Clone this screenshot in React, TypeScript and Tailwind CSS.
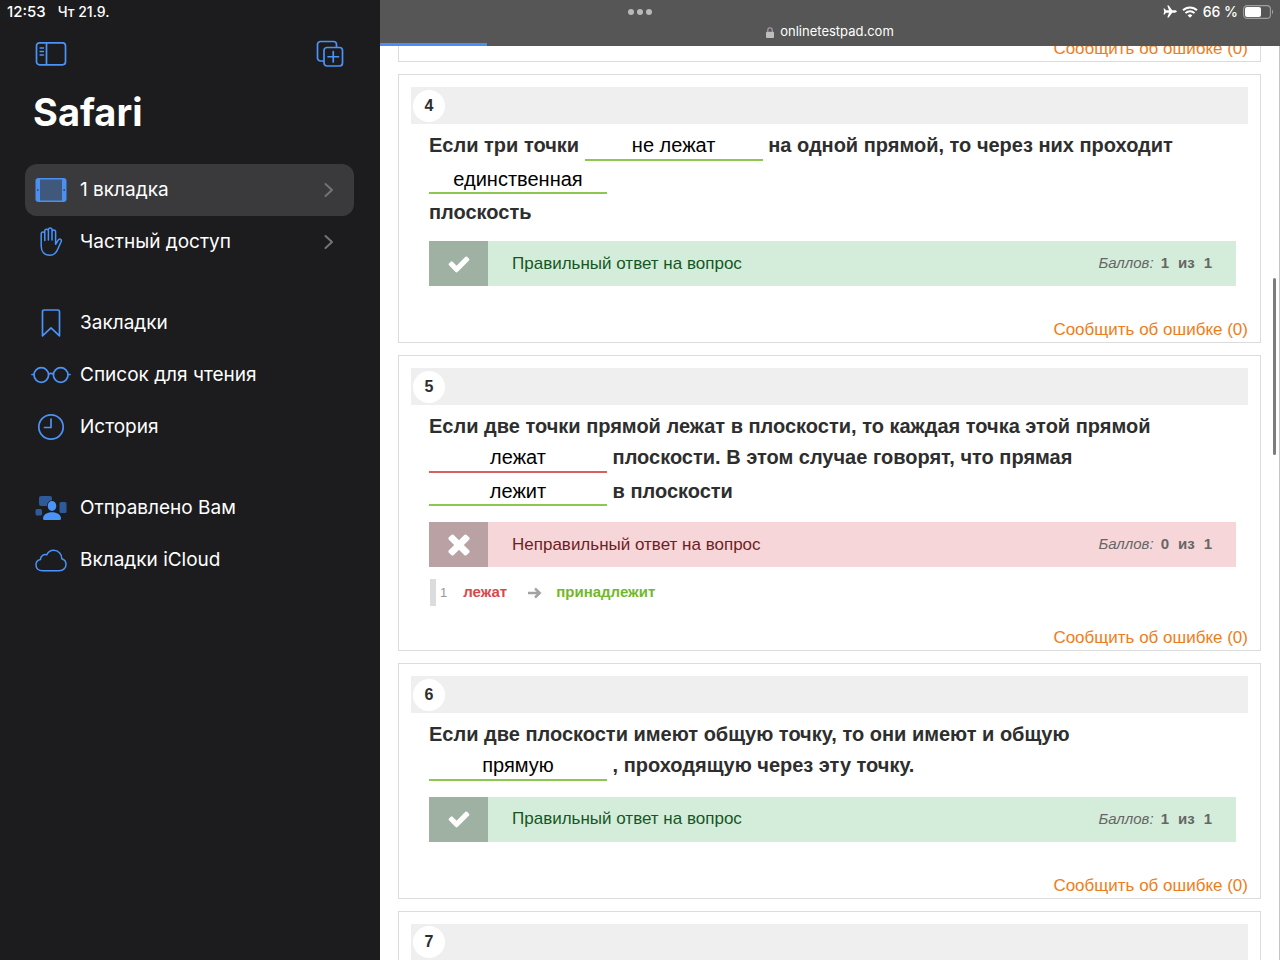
import React from 'react';
import clsx from 'clsx';

type Part = { text: string } | { answer: string; ok: boolean; label: string } | { br: true };

interface Question {
  id: number;
  parts: Part[];
  correct: boolean;
  fix?: { from: string; to: string };
}

const questions: Question[] = [
  {
    id: 4,
    correct: true,
    parts: [
      { text: 'Если три точки ' },
      { answer: 'не лежат', ok: true, label: 'Ответ 1' },
      { text: ' на одной прямой, то через них проходит ' },
      { answer: 'единственная', ok: true, label: 'Ответ 2' },
      { br: true },
      { text: 'плоскость' },
    ],
  },
  {
    id: 5,
    correct: false,
    parts: [
      { text: 'Если две точки прямой лежат в плоскости, то каждая точка этой прямой ' },
      { answer: 'лежат', ok: false, label: 'Ответ 1' },
      { text: ' плоскости. В этом случае говорят, что прямая ' },
      { answer: 'лежит', ok: true, label: 'Ответ 2' },
      { text: ' в плоскости' },
    ],
    fix: { from: 'лежат', to: 'принадлежит' },
  },
  {
    id: 6,
    correct: true,
    parts: [
      { text: 'Если две плоскости имеют общую точку, то они имеют и общую ' },
      { answer: 'прямую', ok: true, label: 'Ответ 1' },
      { text: ' , проходящую через эту точку.' },
    ],
  },
];

const stroke = {
  fill: 'none',
  stroke: 'currentColor',
  strokeWidth: 1.7,
  strokeLinecap: 'round' as const,
  strokeLinejoin: 'round' as const,
};

const SidebarIcon = () => (
  <svg width="32" height="26" viewBox="0 0 32 26" {...stroke}>
    <rect x="1.5" y="1.8" width="29" height="22" rx="3" />
    <path d="M11.5 2v21.600" />
    <path d="M5 7h3.500M5 10.500h3.500M5 14h3.500" strokeWidth="1.3" />
  </svg>
);

const NewGroupIcon = () => (
  <svg width="28" height="28" viewBox="0 0 28 28" {...stroke}>
    <path d="M7.500 21H4.500a3 3 0 0 1-3-3V4.500a3 3 0 0 1 3-3h13a3 3 0 0 1 3 3V7" />
    <rect x="8" y="7.500" width="18.500" height="18.500" rx="3" />
    <path d="M17.250 11.500v10.500M12 16.750h10.500" />
  </svg>
);

const TabIcon = () => (
  <svg width="32" height="26" viewBox="0 0 32 26">
    <rect x="0.500" y="1" width="31" height="24" rx="3" fill="#4a90f0" />
    <rect x="5" y="2.500" width="22" height="21" fill="#40587c" />
    <circle cx="2.800" cy="13" r="0.900" fill="#2c4a78" />
    <circle cx="29.200" cy="13" r="0.900" fill="#2c4a78" />
  </svg>
);

const HandIcon = () => (
  <svg width="24" height="30" viewBox="-1.200 0 24 30" {...stroke} strokeWidth="1.500">
    <path d="M1 19V6.800a1.800 1.800 0 0 1 3.600 0V13.500V4a1.800 1.800 0 0 1 3.600 0V13V2.800a1.800 1.800 0 0 1 3.600 0V13V4.800a1.800 1.800 0 0 1 3.600 0V17.300l2.400-3.900c.8-1.300 1.800-1.600 2.600-1.100.9.500.9 1.400.5 2.400l-3.400 7.600c-1.500 3.800-4 6-8 6C4.200 28.300 1 24.500 1 19Z" />
  </svg>
);

const BookmarkIcon = () => (
  <svg width="20" height="28" viewBox="0 0 20 28" {...stroke}>
    <path d="M1.500 2.700Q1.500 1 3.200 1H16.800Q18.500 1 18.500 2.700V26.800L10 18.800 1.500 26.800Z" />
  </svg>
);

const GlassesIcon = () => (
  <svg width="40" height="18" viewBox="0 0 40 18" {...stroke}>
    <circle cx="10.300" cy="9" r="7.300" />
    <circle cx="29.700" cy="9" r="7.300" />
    <path d="M17.500 8q2.500-1.400 5 0M1 8.500h2M37 8.500h2" />
  </svg>
);

const ClockIcon = () => (
  <svg width="28" height="28" viewBox="0 0 28 28" {...stroke}>
    <circle cx="14" cy="14" r="12.200" />
    <path d="M14 6v8.500H7.500" />
  </svg>
);

const SharedIcon = () => (
  <svg width="32" height="26" viewBox="0 0 32 26">
    <g fill="#2f5a9a">
      <rect x="4" y="1" width="13" height="10" rx="2" />
      <rect x="24.500" y="7" width="7" height="11" rx="1.500" />
      <rect x="0.500" y="14" width="6.500" height="6.500" rx="1.500" />
    </g>
    <g fill="#4a93f8" stroke="#1c1c1e" strokeWidth="1.500" paintOrder="stroke">
      <ellipse cx="17" cy="11" rx="4.300" ry="5" />
      <path d="M8 23.500c0-4 4-6.300 9-6.300s9 2.300 9 6.300q0 1.500-1.500 1.500h-15Q8 25 8 23.500Z" />
    </g>
  </svg>
);

const CloudIcon = () => (
  <svg width="32" height="23" viewBox="0 0 32 23" {...stroke} strokeWidth="1.500">
    <path d="M7.500 21.700C3.600 21.700 1 19.300 1 16c0-2.900 2-5 4.500-5.400C5.300 7.200 8.600 4.800 11.700 5.900 13.200 3 15.700 1.300 18.600 1.300c4.800 0 8.200 3.700 8.200 8.400 2.600.8 4.200 3 4.200 5.700 0 3.500-2.800 6.300-6.600 6.300Z" />
  </svg>
);

const ChevronIcon = () => (
  <svg width="10" height="16" viewBox="0 0 10 16" {...stroke} strokeWidth="2">
    <path d="M1.500 2 8 8l-6.500 6" />
  </svg>
);

const PlaneIcon = () => (
  <svg width="14" height="13" viewBox="0 0 14 13" fill="currentColor">
    <path d="M13.800 6.500c0 .7-1 1.200-2.200 1.200H9.200L5.700 12.500H4.300L6 7.700H3L1.600 9.600H.5L1.200 6.500.5 3.400h1.100L3 5.300h3L4.300.5h1.400l3.500 4.800h2.400c1.200 0 2.200.5 2.200 1.200Z" />
  </svg>
);

const WifiIcon = () => (
  <svg width="16" height="12" viewBox="0 0 16 12" fill="none" stroke="currentColor" strokeWidth="2">
    <path d="M1 4.300a10 10 0 0 1 14 0M3.500 7.100a6.400 6.400 0 0 1 9 0" />
    <path d="M8 11.700 5.700 9.400a3.300 3.300 0 0 1 4.600 0Z" fill="currentColor" stroke="none" />
  </svg>
);

const BatteryIcon = () => (
  <svg width="31" height="14" viewBox="0 0 31 14">
    <rect x="0.600" y="0.600" width="26.800" height="12.800" rx="3.500" fill="none" stroke="#a0a0a0" strokeWidth="1.100" />
    <rect x="2" y="2" width="16" height="10" rx="2" fill="#fff" />
    <path d="M29 4.800c1.500.6 1.500 3.800 0 4.400Z" fill="#a0a0a0" />
  </svg>
);

const LockIcon = () => (
  <svg width="8" height="11" viewBox="0 0 8 11">
    <rect y="4.800" width="8" height="6.200" rx="1" fill="#bdbdbd" />
    <path d="M1.800 5V3a2.200 2.200 0 0 1 4.400 0v2" fill="none" stroke="#a8a8a8" strokeWidth="1.100" />
  </svg>
);

const CheckIcon = () => (
  <svg width="24" height="24" viewBox="0 0 1792 1792" fill="#fff">
    <path d="M1671 566q0 40-28 68l-724 724-136 136q-28 28-68 28t-68-28l-136-136-362-362q-28-28-28-68t28-68l136-136q28-28 68-28t68 28l294 295 656-657q28-28 68-28t68 28l136 136q28 28 28 68z" />
  </svg>
);

const CrossIcon = () => (
  <svg width="32" height="32" viewBox="0 64 1792 1792" fill="#fff">
    <path d="M1490 1322q0 40-28 68l-136 136q-28 28-68 28t-68-28l-294-294-294 294q-28 28-68 28t-68-28l-136-136q-28-28-28-68t28-68l294-294-294-294q-28-28-28-68t28-68l136-136q28-28 68-28t68 28l294 294 294-294q28-28 68-28t68 28l136 136q28 28 28 68t-28 68l-294 294 294 294q28 28 28 68z" />
  </svg>
);

const ArrowIcon = () => (
  <svg width="14" height="12" viewBox="0 0 14 12" fill="none" stroke="#a3a3a3" strokeWidth="2.400">
    <path d="M0 6h11.500M7 1.500 11.800 6 7 10.500" />
  </svg>
);

const groups = [
  [
    { title: '1 вкладка', icon: <TabIcon />, active: true, more: true },
    { title: 'Частный доступ', icon: <HandIcon />, more: true },
  ],
  [
    { title: 'Закладки', icon: <BookmarkIcon /> },
    { title: 'Список для чтения', icon: <GlassesIcon /> },
    { title: 'История', icon: <ClockIcon /> },
  ],
  [
    { title: 'Отправлено Вам', icon: <SharedIcon /> },
    { title: 'Вкладки iCloud', icon: <CloudIcon /> },
  ],
];

const Sidebar = () => (
  <aside className="w-[380px] shrink-0 bg-[#1c1c1e] font-['Inter',sans-serif] text-white">
    <div className="flex h-6 items-baseline gap-3 pl-[7px] text-[14px] leading-6 font-medium">
      <span className="text-[15px]">12:53</span>
      <span>Чт 21.9.</span>
    </div>
    <div className="flex h-[60px] items-center justify-between pr-9 pl-[35px] text-[#4a93f8]">
      <button aria-label="Боковое меню"><SidebarIcon /></button>
      <button aria-label="Новая группа вкладок"><NewGroupIcon /></button>
    </div>
    <h1 className="pl-[33px] text-[38px] leading-[56px] font-bold">Safari</h1>
    <nav className="mt-6 flex flex-col gap-[29px] pr-[26px] pl-[25px]">
      {groups.map((group, i) => (
        <div key={i}>
          {group.map((item) => (
            <button
              key={item.title}
              className={clsx('flex h-[52px] w-full items-center rounded-xl pr-5 text-left', item.active && 'bg-[#3a3a3c]')}
            >
              <span className="flex w-[52px] shrink-0 justify-center text-[#4a93f8]">{item.icon}</span>
              <span className="ml-[3px] grow text-[19px]">{item.title}</span>
              {item.more && <span className="text-[#737378]"><ChevronIcon /></span>}
            </button>
          ))}
        </div>
      ))}
    </nav>
  </aside>
);

const TopBar = () => (
  <header className="relative h-[46px] shrink-0 bg-[#555655] font-['Inter',sans-serif] text-white">
    <div className="flex h-[23px] items-center justify-between pr-[6px] pl-[248px]">
      <button aria-label="Многозадачность" className="flex gap-[3px]">
        <i className="size-[6px] rounded-full bg-[#b9b9b9]" />
        <i className="size-[6px] rounded-full bg-[#b9b9b9]" />
        <i className="size-[6px] rounded-full bg-[#b9b9b9]" />
      </button>
      <div className="flex items-center gap-[5px] text-[14px] font-medium">
        <PlaneIcon />
        <WifiIcon />
        <span>66 %</span>
        <BatteryIcon />
      </div>
    </div>
    <div className="flex h-[18px] items-center justify-center gap-[6px] text-[13px]">
      <LockIcon />
      <span>onlinetestpad.com</span>
    </div>
    <div className="absolute bottom-0 left-0 h-[3px] w-[107px] bg-[#4a8ef5]" />
  </header>
);

const CardHeader = ({ id }: { id: number }) => (
  <div className="flex h-[37px] items-center bg-[#efefef] pl-[2px]">
    <span className="flex size-8 items-center justify-center rounded-full bg-white text-[16px] font-bold">{id}</span>
  </div>
);

const ReportLink = ({ className }: { className?: string }) => (
  <a href="#report" className={clsx('block text-right text-[17px] leading-6 text-[#ee7d1b]', className)}>
    Сообщить об ошибке (0)
  </a>
);

const Result = ({ correct }: { correct: boolean }) => (
  <div className={clsx('flex h-[45px] items-center', correct ? 'bg-[#d4edda] text-[#155724]' : 'bg-[#f6d6d9] text-[#721c24]')}>
    <div className={clsx('flex h-full w-[59px] items-center justify-center', correct ? 'bg-[#9fb1a3]' : 'bg-[#b9a1a4]')}>
      {correct ? <CheckIcon /> : <CrossIcon />}
    </div>
    <span className="ml-6 grow text-[17px]">{correct ? 'Правильный ответ на вопрос' : 'Неправильный ответ на вопрос'}</span>
    <span className="mr-6 flex text-[15px] text-[#666]">
      <em className="mr-[7px]">Баллов:</em>
      <b className="flex gap-[9px]">
        <span>{correct ? 1 : 0}</span>
        <span>из</span>
        <span>1</span>
      </b>
    </span>
  </div>
);

const QuestionCard = ({ question }: { question: Question }) => (
  <section className="border border-[#dcdcdc] px-3 pt-3">
    <CardHeader id={question.id} />
    <div className="pt-[6px] pr-3 pl-[18px]">
      <p className="mb-[13px] text-[20px] leading-[31px] font-bold">
        {question.parts.map((part, i) => {
          if ('br' in part) return <br key={i} />;
          if ('text' in part) return <React.Fragment key={i}>{part.text}</React.Fragment>;
          return (
            <input
              key={i}
              aria-label={part.label}
              defaultValue={part.answer}
              className={clsx(
                'mt-[2px] mb-[3px] h-7 w-[178px] border-b-2 text-center text-[20px] font-normal text-black outline-none',
                part.ok ? 'border-[#8dc751]' : 'border-[#d9605c]'
              )}
            />
          );
        })}
      </p>
      <Result correct={question.correct} />
      {question.fix && (
        <div className="mt-3 ml-px flex h-[27px] items-center border-l-6 border-[#dcdcdc] text-[15px] font-bold">
          <span className="ml-1 text-[13px] font-normal text-[#999]">1</span>
          <span className="ml-4 text-[#d9484a]">{question.fix.from}</span>
          <span className="mr-[14px] ml-[21px]"><ArrowIcon /></span>
          <span className="text-[#72b82b]">{question.fix.to}</span>
        </div>
      )}
    </div>
    <ReportLink className={question.fix ? 'mt-5' : 'mt-8'} />
  </section>
);

const App: React.FC = () => (
  <div className="flex h-screen overflow-hidden bg-white">
    <Sidebar />
    <div className="relative flex min-w-0 grow flex-col">
      <TopBar />
      <main className="min-h-0 grow overflow-hidden border-r border-[#c4c4c4] pr-[18px] pl-[18px] font-['Liberation_Sans',Arial,sans-serif] text-[#2e2e2e]">
        {/* tail of the previous question, scrolled under the top bar */}
        <div className="-mt-[10px] flex flex-col gap-3">
          <section className="border border-[#dcdcdc] px-3">
            <ReportLink />
          </section>
          {questions.map((q) => (
            <QuestionCard key={q.id} question={q} />
          ))}
          <section className="h-[270px] shrink-0 border border-[#dcdcdc] p-3">
            <CardHeader id={7} />
          </section>
        </div>
      </main>
      <div className="absolute top-[278px] right-1 h-[177px] w-[3px] rounded-full bg-[#7d7d7d]" />
    </div>
  </div>
);

export default App;
